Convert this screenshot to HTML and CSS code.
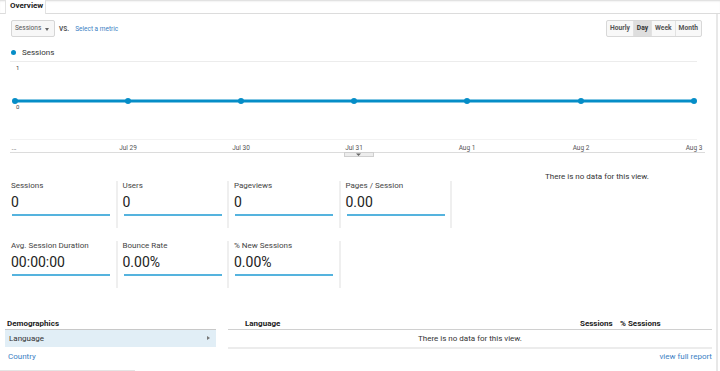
FILE: index.html
```html
<!DOCTYPE html>
<html>
<head>
<meta charset="utf-8">
<link rel="stylesheet" href="styles.css">
</head>
<body>
<div class="tabs"><div class="tab">Overview</div></div>
<div class="content">
  <div class="controls">
    <div class="controls-left">
      <div class="select">Sessions <span class="caret"></span></div>
      <span class="vs">VS.</span>
      <span class="link">Select a metric</span>
    </div>
    <div class="btn-group">
      <div class="btn">Hourly</div>
      <div class="btn active">Day</div>
      <div class="btn">Week</div>
      <div class="btn">Month</div>
    </div>
  </div>
  <div class="legend"><span class="dot"></span>Sessions</div>
  <svg class="chart" width="720" height="102" viewBox="0 0 720 102">
    <line x1="10" y1="4.5" x2="697" y2="4.5" stroke="#ececec" stroke-width="1"/>
    <text x="16" y="13" class="axis">1</text>
    <line x1="10" y1="82.5" x2="697" y2="82.5" stroke="#f2f2f2" stroke-width="1"/>
    <line x1="15" y1="44" x2="695" y2="44" stroke="#058dc7" stroke-width="3"/>
    <g fill="#058dc7">
      <circle cx="15" cy="44" r="3"/>
      <circle cx="128" cy="44" r="3"/>
      <circle cx="241" cy="44" r="3"/>
      <circle cx="354" cy="44" r="3"/>
      <circle cx="467" cy="44" r="3"/>
      <circle cx="581" cy="44" r="3"/>
      <circle cx="694" cy="44" r="3"/>
    </g>
    <text x="16" y="52" class="axis">0</text>
    <g class="xlab" text-anchor="middle">
      <text x="14" y="93">...</text>
      <text x="128" y="93">Jul 29</text>
      <text x="241" y="93">Jul 30</text>
      <text x="354" y="93">Jul 31</text>
      <text x="467" y="93">Aug 1</text>
      <text x="581" y="93">Aug 2</text>
      <text x="694" y="93">Aug 3</text>
    </g>
    <line x1="10" y1="95.5" x2="705" y2="95.5" stroke="#dcdcdc" stroke-width="1"/>
    <rect x="344.5" y="95.5" width="29" height="4" fill="#ededed" stroke="#cfcfcf" stroke-width="1"/>
    <path d="M356 96.5 L361 96.5 L358.5 99 Z" fill="#666"/>
  </svg>
  <div class="summary">
    <div class="metrics">
      <div class="metric"><div class="m-label">Sessions</div><div class="m-value">0</div><div class="m-bar"></div></div>
      <div class="metric"><div class="m-label">Users</div><div class="m-value">0</div><div class="m-bar"></div></div>
      <div class="metric"><div class="m-label">Pageviews</div><div class="m-value">0</div><div class="m-bar"></div></div>
      <div class="metric"><div class="m-label">Pages / Session</div><div class="m-value">0.00</div><div class="m-bar"></div></div>
      <div class="metric"><div class="m-label">Avg. Session Duration</div><div class="m-value">00:00:00</div><div class="m-bar"></div></div>
      <div class="metric"><div class="m-label">Bounce Rate</div><div class="m-value">0.00%</div><div class="m-bar"></div></div>
      <div class="metric"><div class="m-label">% New Sessions</div><div class="m-value">0.00%</div><div class="m-bar"></div></div>
    </div>
    <div class="nodata-side">There is no data for this view.</div>
  </div>
  <div class="demo">
    <div class="demo-left">
      <div class="demo-head">Demographics</div>
      <div class="demo-item selected">Language <span class="arrow"></span></div>
      <div class="demo-item link">Country</div>
      <div class="demo-foot"></div>
    </div>
    <div class="demo-right">
      <div class="tbl-head">
        <span class="th-lang">Language</span>
        <span class="th-sess">Sessions</span>
        <span class="th-pct">% Sessions</span>
      </div>
      <div class="tbl-empty">There is no data for this view.</div>
      <div class="tbl-foot"><span class="link">view full report</span></div>
    </div>
  </div>
</div>
</body>
</html>
```

FILE: styles.css
```css
* { box-sizing: border-box; }
html, body { margin: 0; padding: 0; background: #fff; }
body {
  width: 720px;
  height: 371px;
  overflow: hidden;
  font-family: Roboto, "Liberation Sans", Arial, sans-serif;
  font-size: 8px;
  color: #333;
}
.tabs {
  height: 14px;
  border-bottom: 1px solid #dcdcdc;
  box-shadow: inset 0 2px 2px -1px #d8d8d8;
  padding-left: 5px;
}
.tab {
  display: inline-block;
  height: 14px;
  width: 41px;
  background: #fff;
  border-left: 1px solid #e2e2e2;
  border-right: 1px solid #e2e2e2;
  font-weight: bold;
  font-size: 8px;
  line-height: 12px;
  padding-left: 4px;
  color: #222;
}
.content {
  width: 718px;
  height: 357px;
  border-right: 2px solid #e8e8e8;
}
.controls {
  display: flex;
  justify-content: space-between;
  align-items: center;
  padding: 6px 14px 0 11px;
  height: 23px;
}
.controls-left { display: flex; align-items: center; }
.select {
  width: 44px;
  height: 17px;
  border: 1px solid #d6d6d6;
  border-radius: 2px;
  background: #f7f7f7;
  font-size: 6.5px;
  color: #555;
  line-height: 15px;
  padding-left: 3px;
  position: relative;
}
.caret {
  position: absolute;
  right: 5px;
  top: 7px;
  border-left: 2.5px solid transparent;
  border-right: 2.5px solid transparent;
  border-top: 3px solid #666;
}
.vs { font-size: 6.5px; color: #555; margin-left: 4px; font-weight: bold; }
.link { color: #3b7fc4; }
.controls-left .link { font-size: 6.5px; margin-left: 6px; }
.btn-group {
  display: flex;
  border: 1px solid #d8d8d8;
  border-radius: 2px;
  height: 17px;
  background: #f8f8f8;
}
.btn {
  font-size: 6.7px;
  font-weight: bold;
  color: #555;
  line-height: 15px;
  padding: 0 3px;
  border-left: 1px solid #e2e2e2;
}
.btn:first-child { border-left: none; }
.btn.active { background: #dedede; color: #333; }
.legend {
  display: flex;
  align-items: center;
  margin-top: 11px;
  padding-left: 11px;
  height: 9px;
  font-size: 8px;
  color: #333;
}
.dot {
  width: 5px; height: 5px; border-radius: 50%;
  background: #058dc7;
  margin-right: 6px;
}
.chart { display: block; }
.axis { font-size: 6px; fill: #444; font-family: Roboto, "Liberation Sans", sans-serif; }
.xlab text { font-size: 6.5px; fill: #555; font-family: Roboto, "Liberation Sans", sans-serif; }
.summary {
  display: flex;
  margin-top: 13px;
}
.metrics {
  display: grid;
  grid-template-columns: repeat(4, 111.5px);
  row-gap: 13px;
  padding-left: 6px;
  margin-top: 9px;
}
.metric {
  height: 47px;
  border-right: 2px solid #efefef;
  padding-left: 5px;
}
.m-label { font-size: 8px; line-height: 10px; color: #444; }
.m-value { font-size: 14px; line-height: 18px; margin-top: 2px; color: #222; }
.m-bar { width: 98px; height: 2px; background: #55b3de; margin-top: 3px; margin-left: 1px; }
.nodata-side {
  flex: 1;
  text-align: center;
  padding-left: 26px;
  font-size: 8px;
  color: #333;
}
.demo {
  display: flex;
  margin-top: 30px;
  padding-left: 5px;
}
.demo-left { width: 211px; }
.demo-head {
  font-weight: bold;
  font-size: 8px;
  color: #222;
  height: 12px;
  line-height: 12px;
  padding-left: 2px;
  border-bottom: 1px solid #c8c8c8;
}
.demo-item {
  height: 18px;
  line-height: 18px;
  padding-left: 4px;
  font-size: 8px;
  position: relative;
}
.demo-item.selected { background: #e1eef6; color: #333; height: 17px; line-height: 17px; }
.arrow {
  position: absolute;
  left: 202px;
  top: 6px;
  border-top: 2.5px solid transparent;
  border-bottom: 2.5px solid transparent;
  border-left: 3px solid #777;
}
.demo-item.link { color: #3b7fc4; padding-left: 3px; height: 20px; line-height: 20px; }
.demo-foot {
  width: 135px;
  margin-left: -5px;
  margin-top: 3px;
  border-bottom: 1px solid #e4e4e4;
}
.demo-right { width: 484px; margin-left: 12px; }
.tbl-head {
  display: flex;
  height: 12px;
  line-height: 12px;
  font-weight: bold;
  font-size: 8px;
  color: #222;
  border-bottom: 1px solid #d0d0d0;
}
.th-lang { padding-left: 17px; flex: 1; }
.th-sess { width: 40px; }
.th-pct { width: 92px; }
.tbl-empty {
  height: 19px;
  line-height: 17px;
  text-align: center;
  font-size: 8px;
  color: #333;
  border-bottom: 2px solid #ececec;
}
.tbl-foot {
  text-align: right;
  font-size: 8px;
  line-height: 10px;
  margin-top: 3px;
}
```
